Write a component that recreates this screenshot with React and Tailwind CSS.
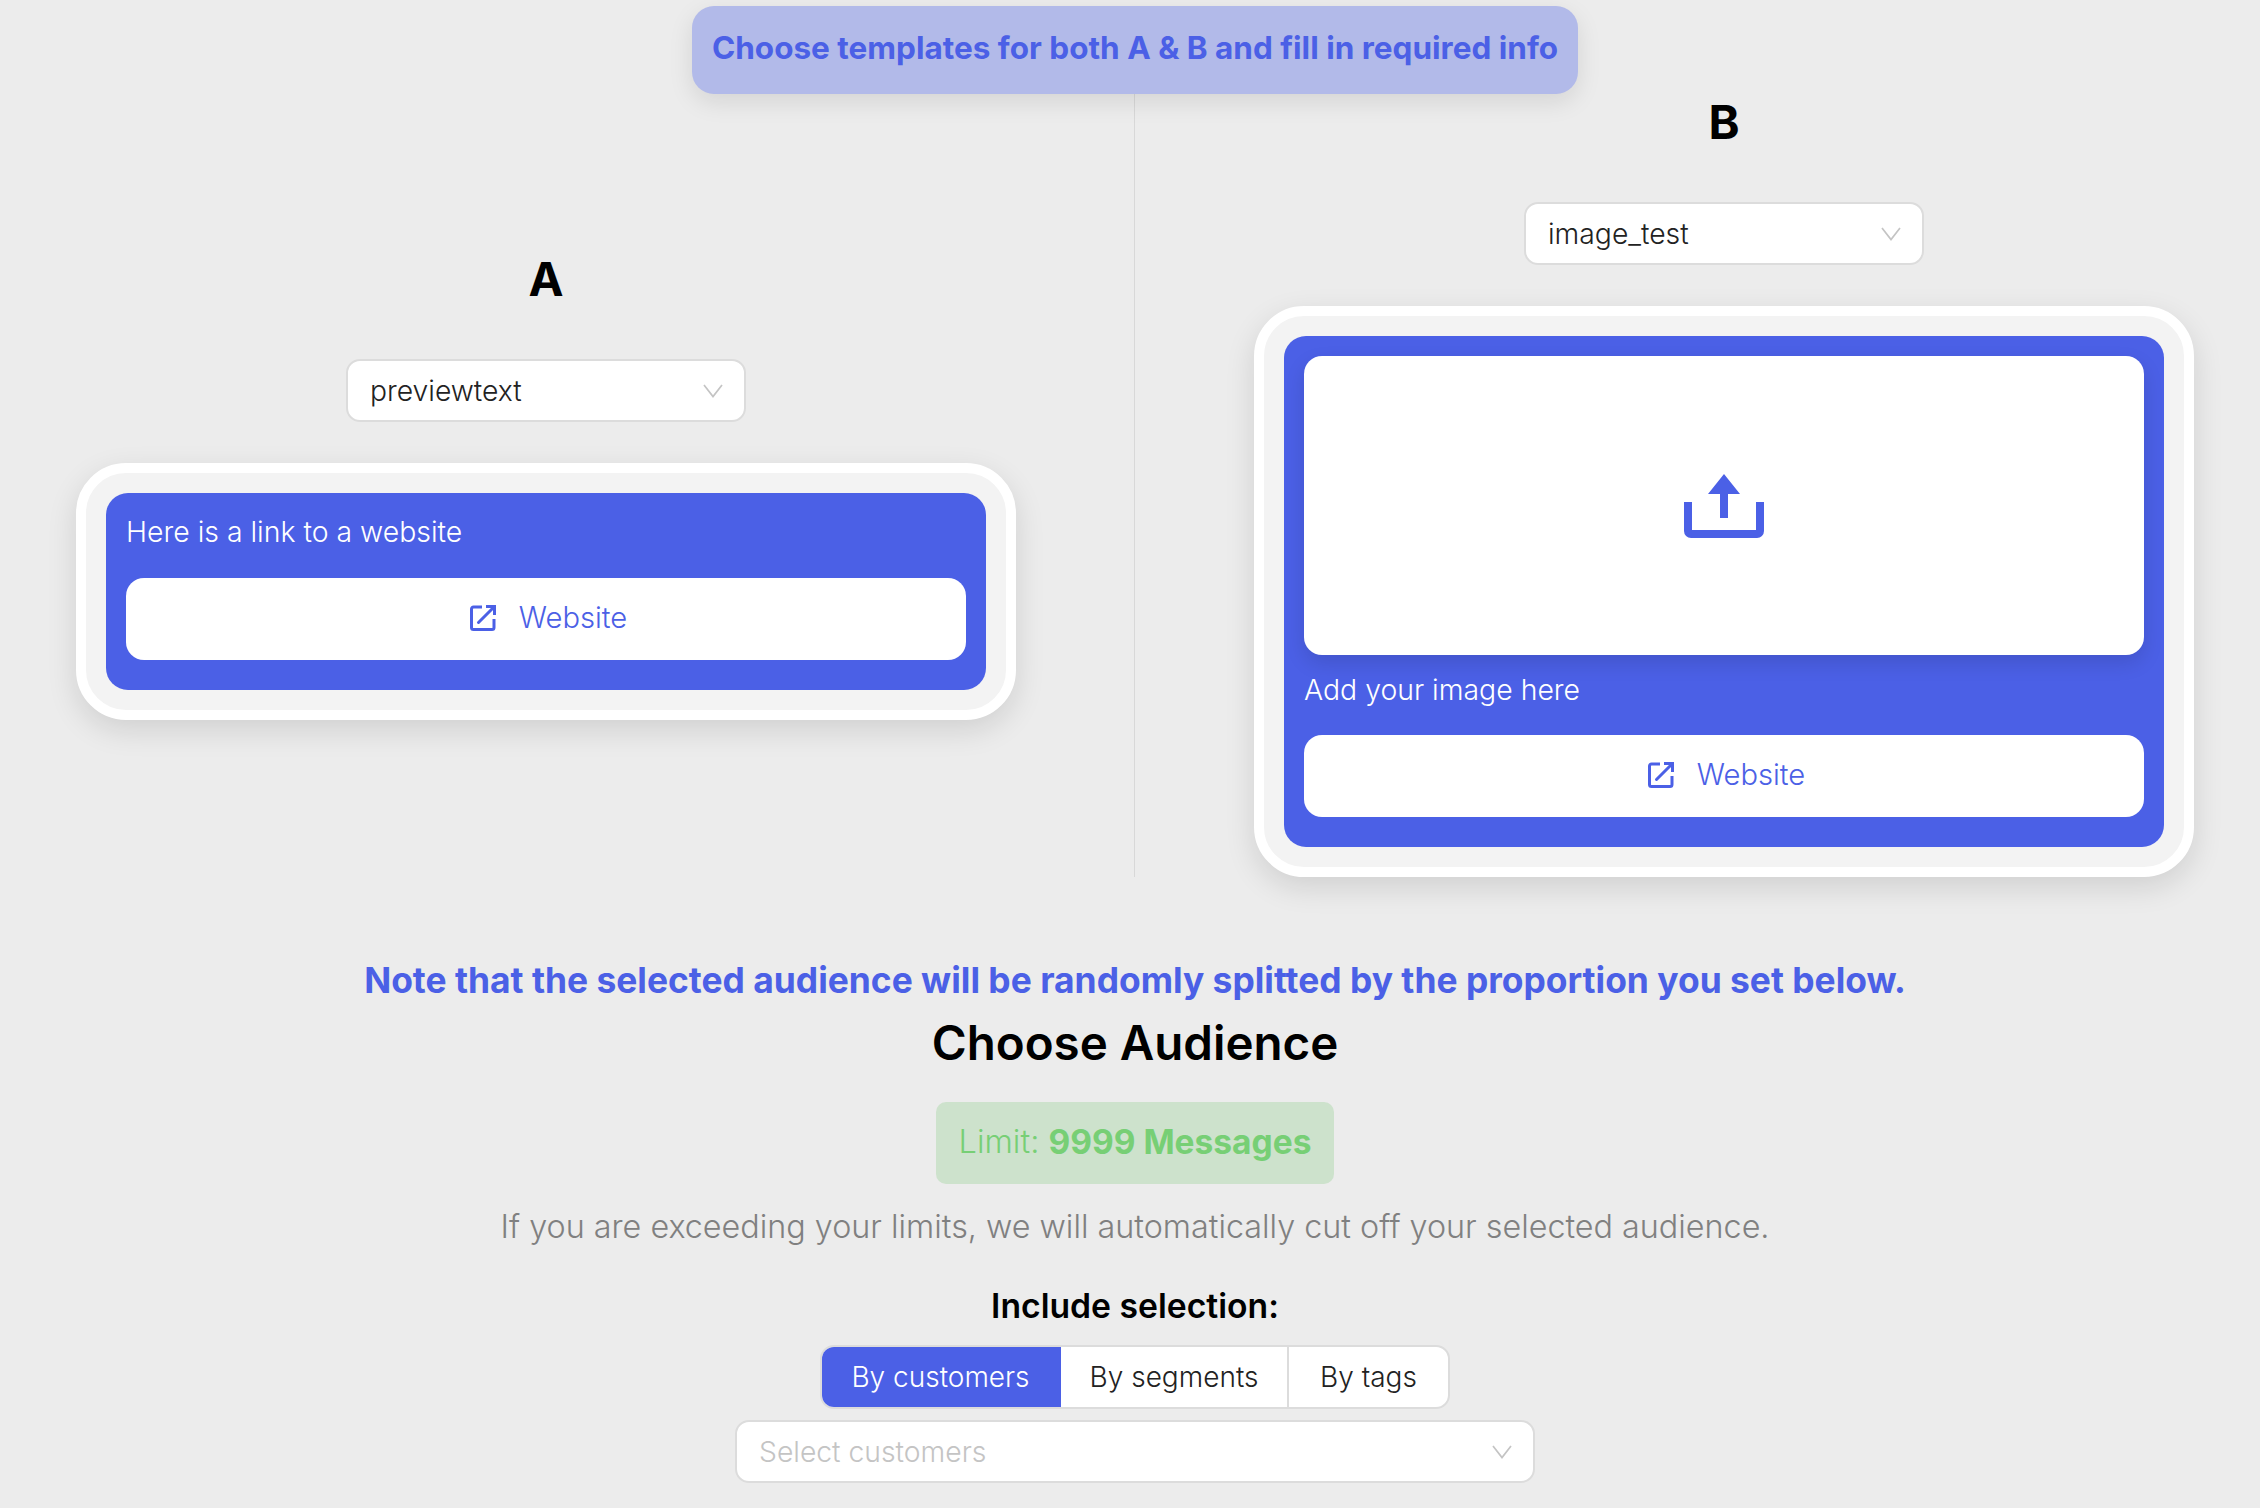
const font = "font-['Inter',sans-serif]";

function Chevron() {
  return (
    <svg width="20" height="14" viewBox="0 0 20 14" fill="none" stroke="#c4c4c4" strokeWidth="1.7">
      <path d="M1 1l9 11.5L19 1" />
    </svg>
  );
}

function ExternalIcon() {
  return (
    <svg width="26" height="26" viewBox="0 0 26 26" fill="none" stroke="#4b60e6" strokeWidth="3">
      <path d="M12 2H3.5A2 2 0 0 0 1.5 4v18.5a2 2 0 0 0 2 2H22a2 2 0 0 0 2-2V14" />
      <path d="M8.5 17.5L23 3" strokeLinecap="round" />
      <path d="M16 1.5h8.5V10" />
    </svg>
  );
}

function UploadIcon() {
  return (
    <svg width="80" height="64" viewBox="0 0 80 64" fill="#4b60e6">
      <path d="M40 0l16 20H44v24h-8V20H24z" />
      <path d="M0 28h8v28h64V28h8v29a7 7 0 0 1-7 7H7a7 7 0 0 1-7-7z" />
    </svg>
  );
}

function SelectBox({ label, className, placeholder }) {
  return (
    <div className={`flex h-[63px] items-center justify-between rounded-[14px] border-2 border-[#dcdcdc] bg-white pl-[22px] pr-[21px] text-[28.3px] ${placeholder ? "text-[#c4c4c4]" : "text-[#222222]"} ${className}`}>
      <span className="pt-px font-light">{label}</span>
      <Chevron />
    </div>
  );
}

function WebsiteButton() {
  return (
    <div className="flex h-[82px] items-center justify-center gap-[23px] rounded-[18px] bg-white pb-[2px] pl-[5px] text-[29.2px] font-light text-[#4b60e6]">
      <ExternalIcon />
      <span>Website</span>
    </div>
  );
}

function Phone({ children }) {
  return (
    <div className="w-[940px] rounded-[50px] border-[10px] border-white bg-[#f3f3f3] p-5 shadow-[0_10px_30px_rgba(0,0,0,0.12)]">
      <div className="rounded-[22px] bg-[#4b60e6] px-5 pb-[30px] pt-5">{children}</div>
    </div>
  );
}

function Variant({ letter, select, children }) {
  return (
    <div className="flex flex-col items-center">
      <h2 className="mb-[52px] h-[56px] text-[47px] font-bold leading-[56px] text-black">{letter}</h2>
      <SelectBox label={select} className="mb-[41px] w-[400px]" />
      <Phone>{children}</Phone>
    </div>
  );
}

export default function App() {
  return (
    <div className="h-[1508px] overflow-hidden bg-[#ececec]">
      {/* the page runs a bit wider than the window, so its centre sits at 1135 */}
      <div className={`${font} flex w-[2270px] flex-col items-center`}>
        <div className="relative z-10 mt-[6px] flex h-[88px] w-[886px] items-center justify-center rounded-[22px] bg-[#b2bae9] pb-1 text-[31.5px] font-bold text-[#4b60e6] shadow-[0_8px_24px_rgba(0,0,0,0.1)]">
          Choose templates for both A &amp; B and fill in required info
        </div>

        <div className="flex w-full">
          <div className="flex w-[1135px] items-center border-r border-[#d8d8d8] pl-[76px]">
            <Variant letter="A" select="previewtext">
              <p className="mb-[27px] h-[38px] text-[28.4px] font-light leading-[38px] text-white">Here is a link to a website</p>
              <WebsiteButton />
            </Variant>
          </div>
          <div className="pl-[119px]">
            <Variant letter="B" select="image_test">
              <div className="flex h-[299px] items-center justify-center rounded-[18px] bg-white shadow-[0_8px_20px_rgba(0,0,0,0.12)]">
                <UploadIcon />
              </div>
              <p className="mb-[26px] mt-4 h-[38px] text-[28.4px] font-light leading-[38px] text-white">Add your image here</p>
              <WebsiteButton />
            </Variant>
          </div>
        </div>

        <p className="mt-[81px] text-[35.4px] font-bold leading-[46px] text-[#4b60e6]">
          Note that the selected audience will be randomly splitted by the proportion you set below.
        </p>
        <h1 className="mt-[11px] text-[47.5px] font-semibold leading-[56px] text-black">Choose Audience</h1>
        <div className="mt-[31px] flex h-[82px] w-[398px] items-center justify-center rounded-[10px] bg-[#cde2cc] pb-[2px] text-[#77cf75]">
          <span className="text-[32.5px] font-light">Limit:&nbsp;</span>
          <span className="text-[33.5px] font-bold">9999 Messages</span>
        </div>
        <p className="mt-[23px] text-[32.3px] font-light leading-[40px] text-[#808080]">
          If you are exceeding your limits, we will automatically cut off your selected audience.
        </p>
        <h3 className="mt-[39px] text-[33.7px] font-semibold leading-[40px] text-black">Include selection:</h3>
        <div className="mt-[19px] flex h-[64px] w-[630px] overflow-hidden rounded-[14px] border-2 border-[#dcdcdc] bg-white text-[28px] text-[#222222]">
          <div className="-my-[2px] -ml-[2px] flex w-[241px] items-center justify-center bg-[#4b60e6] font-light text-white">By customers</div>
          <div className="flex flex-1 items-center justify-center border-r-2 border-[#dcdcdc] font-light">By segments</div>
          <div className="flex w-[159px] items-center justify-center font-light">By tags</div>
        </div>
        <SelectBox label="Select customers" placeholder className="mt-[11px] w-[800px]" />
      </div>
    </div>
  );
}
